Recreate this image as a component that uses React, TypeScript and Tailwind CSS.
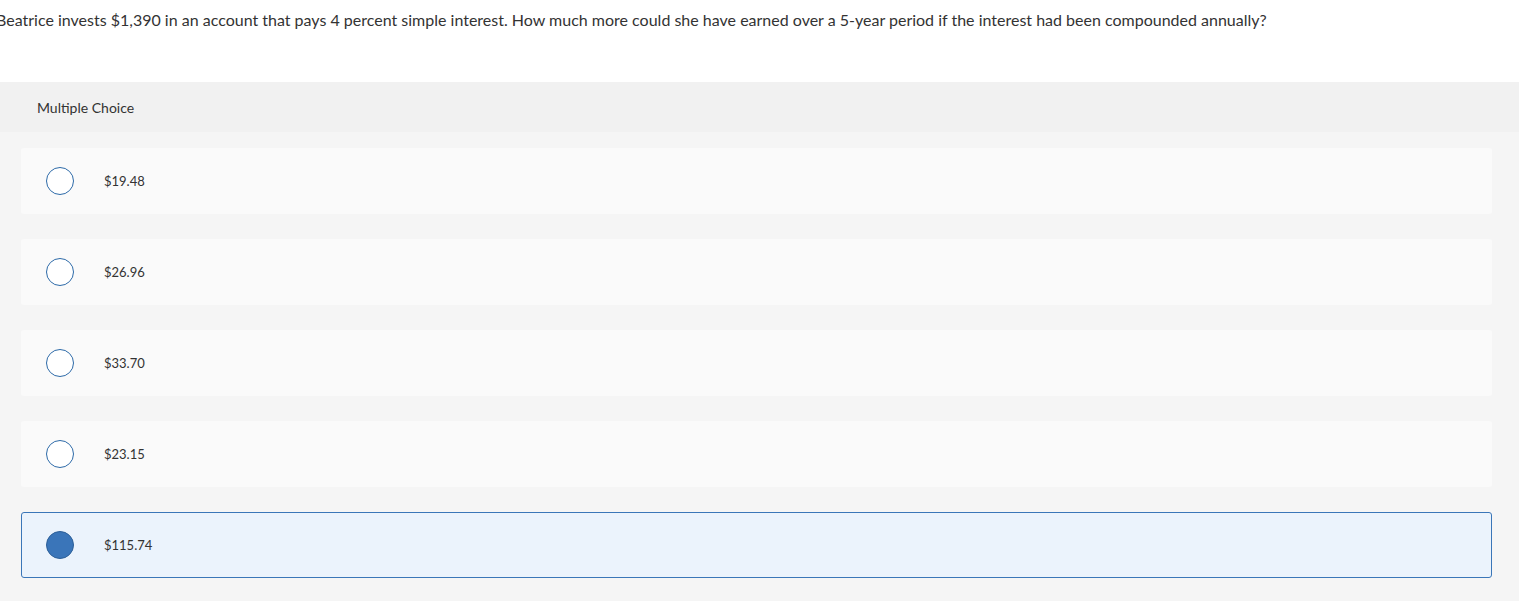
import { useState } from 'react';

const choices = ['$19.48', '$26.96', '$33.70', '$23.15', '$115.74'];

export default function App() {
  const [picked, setPicked] = useState(4);

  return (
    <div className="min-h-[601px] bg-[#f5f5f5] font-['Lato',sans-serif] text-[#333]">
      <div className="h-[82px] bg-white pt-[9px]">
        <p className="-ml-[4px] whitespace-nowrap text-[16px] leading-[22px] text-[#333]">
          Beatrice invests $1,390 in an account that pays 4 percent simple interest. How much more could she have
          earned over a 5-year period if the interest had been compounded annually?
        </p>
      </div>

      <div className="flex h-[50px] items-center bg-[#f1f1f1] px-[37px] pt-[1px] text-[14px] text-[#333]">
        Multiple Choice
      </div>

      <div className="flex flex-col gap-[25px] pl-[21px] pr-[27px] pt-[16px]">
        {choices.map((c, i) => {
          const on = picked === i;
          return (
            <button
              key={c}
              type="button"
              onClick={() => setPicked(i)}
              className={`flex h-[66px] items-center rounded-[3px] border pl-[24px] text-left ${
                on ? 'border-[#3a76b8] bg-[#ebf3fc]' : 'border-transparent bg-[#fafafa]'
              }`}
            >
              <span
                className={`h-[28px] w-[28px] shrink-0 rounded-full border ${
                  on ? 'border-[#2c5f98] bg-[#3a75b9]' : 'border-[#2d6aa8] bg-white'
                }`}
              />
              <span className="ml-[30px] pt-[1px] text-[13px] text-[#333]">{c}</span>
            </button>
          );
        })}
      </div>
    </div>
  );
}
